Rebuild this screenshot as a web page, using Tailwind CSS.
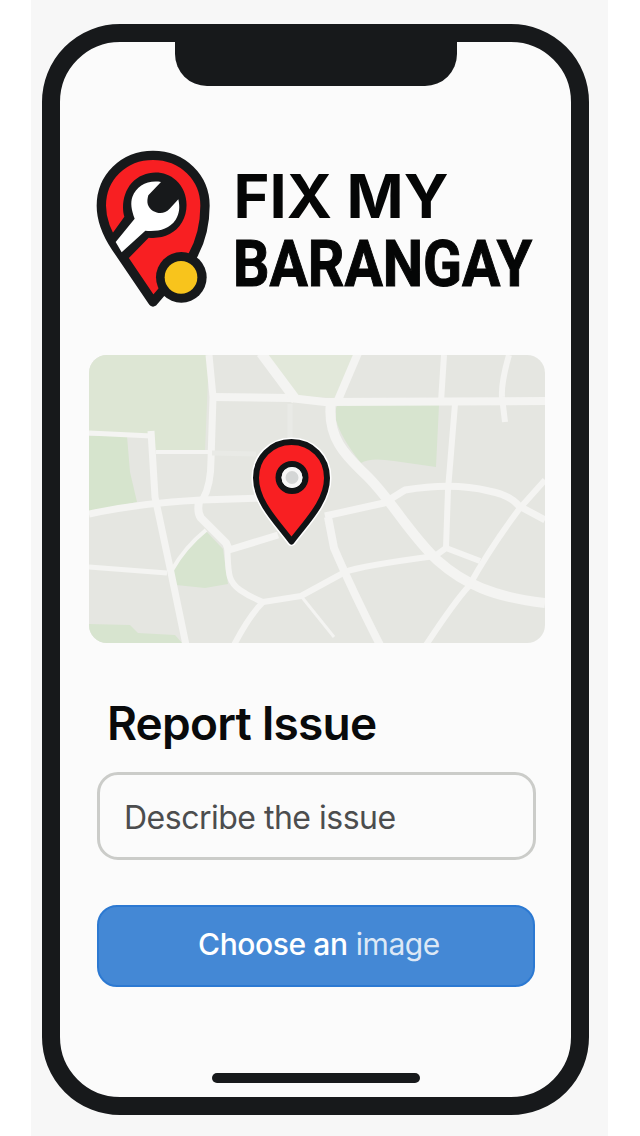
<!DOCTYPE html>
<html lang="en">
<head>
<meta charset="utf-8">
<title>Fix My Barangay</title>
<script src="https://cdn.jsdelivr.net/npm/@tailwindcss/browser@4"></script>
</head>
<body class="bg-white w-[640px] h-[1136px] overflow-hidden">
<div class="ml-[31px] w-[577px] h-[1136px] bg-[#f7f7f7] pt-6 pl-[11px]">
  <main class="w-[547px] h-[1091px] border-[18px] border-[#17191b] rounded-[78px] bg-[#fbfbfb] flex flex-col font-['Inter',sans-serif]">
    <div class="ml-[115px] w-[282px] h-[45px] shrink-0 -mt-px bg-[#17191b] rounded-b-[32px]"></div>

    <header class="mt-[49px] ml-5 flex shrink-0 h-[190px]">
      <svg class="w-[150px] h-[190px] shrink-0" viewBox="0 0 450 570">
        <path d="M219 61C130 61 64 128 64 212C64 256 78 292 108 337L219 501L338 362C364 315 375 262 375 212C375 128 308 61 219 61Z" fill="#f81f22" stroke="#17191b" stroke-width="28" stroke-linejoin="round"/>
        <path d="M133 245C124 215 130 172 155 144C190 106 251 102 288 136C323 168 329 222 306 262C285 298 247 312 206 308L134 382L90 305Z" fill="#17191b"/>
        <path d="M243 141C204 134 170 152 157 186C151 204 154 224 164 251L107 321L125 352L196 287C233 290 267 284 287 254C299 235 300 215 295 193L269 221C254 237 236 237 219 228C202 217 199 201 205 181Z" fill="#fff"/>
        <circle cx="304" cy="427" r="76" fill="#17191b"/>
        <circle cx="303" cy="427" r="49" fill="#f8c41c"/>
      </svg>
      <svg class="w-[320px] h-[190px] shrink-0 overflow-visible" viewBox="230 135 320 190" fill="#050606">
        <text x="233.500" y="217.500" class="font-['Inter',sans-serif] font-bold text-[60px]" textLength="215" lengthAdjust="spacingAndGlyphs">FIX MY</text>
        <text x="233" y="286" class="font-['Roboto',sans-serif] font-bold text-[65px]" stroke="#050606" stroke-width="1" textLength="299" lengthAdjust="spacingAndGlyphs">BARANGAY</text>
      </svg>
    </header>

    <svg class="mt-[30px] ml-[29px] w-[456px] h-[288px] shrink-0 rounded-[18px]" viewBox="89 355 456 288">
      <rect x="89" y="355" width="456" height="288" fill="#e5e6e1"/>
      <path d="M89 355H209L205 451L156 451L152 435L89 433Z" fill="#dde6d4"/>
      <path d="M89 436H127L130 472L137 502L89 512Z" fill="#d6e4cd"/>
      <path d="M266 355H354L336 398L298 396Z" fill="#e2e8da"/>
      <path d="M336 408Q337 405 340 405H439L436 467L394 461Q370 457 361 463Q341 438 336 420Z" fill="#d7e4cf"/>
      <path d="M205 530L223 549L228 584L205 588L176 585L172 568Z" fill="#d7e4cf"/>
      <path d="M89 624L130 625L138 633L175 635L182 643H89Z" fill="#d7e4cf"/>
      <g fill="none" stroke="#f4f4f2" stroke-linejoin="round">
        <path d="M209 355L213 397L211 460Q211 485 203 499" stroke-width="7"/>
        <path d="M213 397L290 398L325 402L545 401" stroke-width="8"/>
        <path d="M261 353L296 400" stroke-width="10"/>
        <path d="M358 353L338 400" stroke-width="8"/>
        <path d="M331 402C326 442 352 461 368 477C392 501 408 532 437 560C464 584 493 597 545 603" stroke-width="10"/>
        <path d="M455 404L448 490L446 548M444 355L441 402" stroke-width="6"/>
        <path d="M509 355Q501 383 502 397L505 422" stroke-width="6"/>
        <path d="M89 433L152 436" stroke-width="5"/>
        <path d="M151 431L155 497L169 563L186 645" stroke-width="7"/>
        <path d="M156 452H212" stroke-width="4"/>
        <path d="M212 453L256 454M290 404V440" stroke-width="5" stroke="#e9eae6"/>
        <path d="M89 514Q140 503 201 500L266 498" stroke-width="7"/>
        <path d="M89 567L167 573" stroke-width="5"/>
        <path d="M172 570Q185 547 206 530" stroke-width="4"/>
        <path d="M199 501Q197 513 201 518L226 543L229 550" stroke-width="8"/>
        <path d="M229 550L278 535M325 516L384 503L405 490Q453 482 489 491Q510 495 519 506L545 520" stroke-width="7"/>
        <path d="M227 545C229 570 226 580 240 590Q250 597 263 602L301 596L345 572Q360 566 435 556L446 548L480 561" stroke-width="6"/>
        <path d="M263 602Q249 616 234 645" stroke-width="6"/>
        <path d="M301 596L334 637" stroke-width="3"/>
        <path d="M328 517L334 548Q352 590 380 645" stroke-width="8"/>
        <path d="M545 480L520 508Q490 548 469 586Q455 601 426 645" stroke-width="6"/>
      </g>
      <path d="M291.500 442C271 442 256 458 256 478C256 502 277 522 291.500 541.500C306 522 327 502 327 478C327 458 312 442 291.500 442Z" fill="#fff" stroke="#fff" stroke-width="9" stroke-linejoin="round"/>
      <path d="M291.500 442C271 442 256 458 256 478C256 502 277 522 291.500 541.500C306 522 327 502 327 478C327 458 312 442 291.500 442Z" fill="#f81f22" stroke="#111416" stroke-width="6" stroke-linejoin="round"/>
      <circle cx="292" cy="477.500" r="13.500" fill="#d4d6d6" stroke="#111416" stroke-width="6"/>
      <circle cx="292" cy="477.500" r="8.500" fill="none" stroke="#f7f7f7" stroke-width="4"/>
    </svg>

    <h1 class="mt-[54px] ml-[47px] h-[52px] shrink-0 leading-[52px] text-[46px] font-semibold tracking-[-0.8px] text-[#090a0b] whitespace-nowrap">Report Issue</h1>
    <div class="mt-[23px] ml-[37px] w-[439px] h-[88px] shrink-0 border-[3px] border-[#cbccc9] rounded-[21px] px-6 pt-[3px] flex items-center text-[32px] tracking-[-0.5px] text-[#4c4d4e] whitespace-nowrap">Describe the issue</div>
    <button class="mt-[45px] ml-[37px] w-[438px] h-[82px] shrink-0 rounded-[20px] bg-[#4488d5] border-2 border-[#2c79d2] pl-[6px] pb-[3px] flex items-center justify-center text-[30px] tracking-[-0.4px] text-white whitespace-nowrap"><span><span class="font-medium">Choose an</span> <span class="text-[#dde8f6]">image</span></span></button>
    <div class="mt-[86px] ml-[152px] w-[208px] h-[10px] shrink-0 rounded-full bg-[#17191b]"></div>
  </main>
</div>
</body>
</html>
